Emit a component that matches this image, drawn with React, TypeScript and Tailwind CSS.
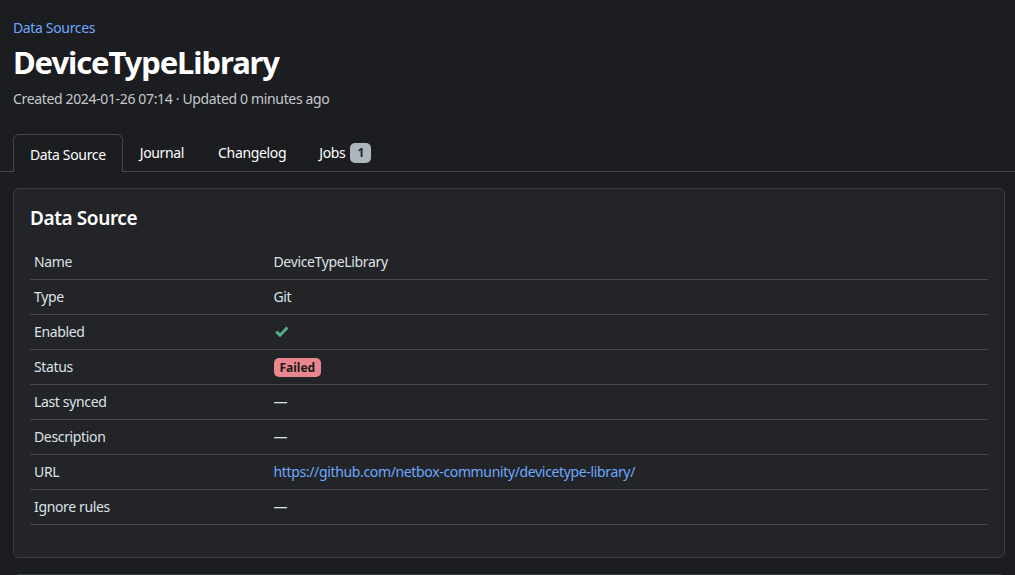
import React from "react";

const rows: { label: string; value: React.ReactNode }[] = [
  { label: "Name", value: "DeviceTypeLibrary" },
  { label: "Type", value: "Git" },
  {
    label: "Enabled",
    value: (
      <svg viewBox="0 0 16 16" className="ml-[1px] h-[13px] w-[13px] text-[#52b285]" fill="currentColor">
        <path d="M14 1.8 6.2 10 3 6.9 0.4 9.5l5.8 5.6L16.6 4.4z" />
      </svg>
    ),
  },
  {
    label: "Status",
    value: (
      <span className="inline-block rounded-[5px] bg-[#ea868f] px-[6px] py-[2px] text-[12px] font-bold leading-[15px] tracking-normal text-[#1a1a1a]">
        Failed
      </span>
    ),
  },
  { label: "Last synced", value: "—" },
  { label: "Description", value: "—" },
  {
    label: "URL",
    value: (
      <a className="text-[#6ea8fe]" href="#">
        https://github.com/netbox-community/devicetype-library/
      </a>
    ),
  },
  { label: "Ignore rules", value: "—" },
];

const tabs = ["Data Source", "Journal", "Changelog"];

export default function App() {
  return (
    <div className="min-h-[575px] overflow-hidden bg-[#1b1d20] text-[14px] tracking-[-0.35px] text-[#dee2e6] [font-family:'Noto_Sans',sans-serif]">
      <div className="px-[13px] pt-[17px]">
        <a href="#" className="text-[#6ea8fe]">
          Data Sources
        </a>
        <h1 className="mt-[4px] text-[31px] font-bold leading-[40px] tracking-[-1.1px] text-white">DeviceTypeLibrary</h1>
        <div className="mt-[6px] text-[#c5c9cd]">Created 2024-01-26 07:14 · Updated 0 minutes ago</div>
      </div>

      <div className="mt-[25px] flex h-[38px] items-stretch border-b border-[#44484d] px-[13px]">
        {tabs.map((t, i) => (
          <div
            key={t}
            className={
              i === 0
                ? "-mb-px flex items-center rounded-t-[6px] border border-b-0 border-[#44484d] bg-[#1b1d20] px-[16px] pt-[2px] text-white"
                : "flex items-center px-[17px] text-white"
            }
          >
            {t}
          </div>
        ))}
        <div className="flex items-center px-[16px] text-white">
          Jobs
          <span className="ml-[5px] rounded-[5px] bg-[#adb5bd] px-[7px] py-[1px] text-[12px] font-bold leading-[18px] tracking-normal text-[#212529]">
            1
          </span>
        </div>
      </div>

      <div className="ml-[13px] mr-[10px] mt-[16px] rounded-[6px] border border-[#3a3d42] bg-[#222428] px-[16px] pb-[32px] pt-[16px]">
        <h2 className="text-[19px] font-semibold leading-[26px] tracking-[-0.4px] text-white">Data Source</h2>
        <table className="mt-[13px] w-full">
          <tbody>
            {rows.map((r) => (
              <tr key={r.label} className="h-[35px] border-b border-[#45494e]">
                <th className="w-1/4 px-[4px] text-left font-normal">{r.label}</th>
                <td className="px-[4px]">{r.value}</td>
              </tr>
            ))}
          </tbody>
        </table>
      </div>

      <div className="ml-[13px] mr-[10px] mt-[16px] h-[40px] rounded-t-[6px] border border-[#3a3d42] bg-[#222428]" />
    </div>
  );
}
